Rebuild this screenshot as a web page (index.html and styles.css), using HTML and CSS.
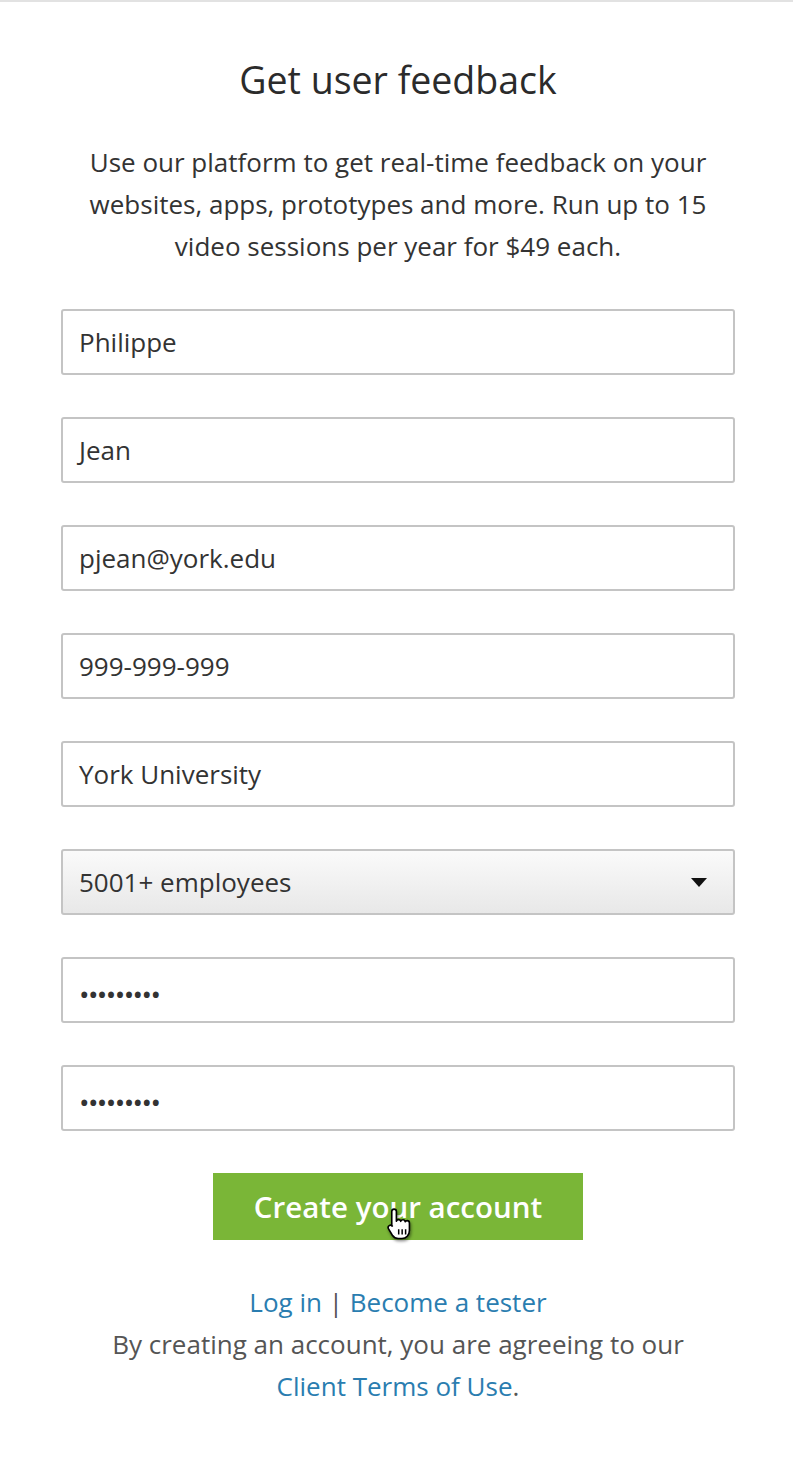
FILE: index.html
```html
<!DOCTYPE html>
<html>
<head>
<meta charset="utf-8">
<link rel="stylesheet" href="styles.css">
</head>
<body>
<div class="page">
  <h1 class="title">Get user feedback</h1>
  <p class="intro">Use our platform to get real-time feedback on your websites, apps, prototypes and more. Run up to 15 video sessions per year for $49 each.</p>
  <form class="form">
    <div class="field">Philippe</div>
    <div class="field">Jean</div>
    <div class="field">pjean@york.edu</div>
    <div class="field">999-999-999</div>
    <div class="field">York University</div>
    <div class="field select"><span>5001+ employees</span><span class="caret"></span></div>
    <div class="field pw">•••••••••</div>
    <div class="field pw">•••••••••</div>
    <div class="btn-wrap">
      <div class="btn">Create your account
        <svg class="cursor" width="30" height="35" viewBox="0 0 26 30">
          <path d="M7 2.5c1.2 0 2 .8 2 2V13c.3-.9 1-1.4 1.9-1.4 1 0 1.7.6 1.9 1.5.3-.8 1-1.3 1.9-1.3 1 0 1.8.7 1.9 1.7.3-.6 1-1 1.700-1 1.1 0 2 .9 2 2v6.5c0 4-2.8 7-6.5 7h-3.3c-2.2 0-3.8-1-5-2.8L2.2 19.6c-.6-1-.3-2.2.6-2.8.9-.6 2-.4 2.7.4L5 17.1V4.5c0-1.2.8-2 2-2z" fill="#fff" stroke="#000" stroke-width="1.4" stroke-linejoin="round"/>
          <path d="M11 20v4.5M14 20v4.5M17 20v4.5" stroke="#000" stroke-width="1.3"/>
        </svg>
      </div>
    </div>
  </form>
  <div class="links"><a class="link">Log in</a> | <a class="link">Become a tester</a></div>
  <p class="terms">By creating an account, you are agreeing to our <a class="link">Client Terms of Use</a>.</p>
</div>
</body>
</html>
```

FILE: styles.css
```css
html, body {
  margin: 0;
  padding: 0;
  background: #fff;
}
body {
  font-family: "Open Sans", Lato, sans-serif;
  color: #333;
}
.page {
  border-top: 2px solid #e2e2e2;
  width: 793px;
  box-sizing: border-box;
  padding: 0 58px 0 61px;
}
.title {
  margin: 56px 0 0;
  text-align: center;
  font-weight: 400;
  font-size: 37.5px;
  line-height: 44px;
  color: #2b2b2b;
}
.intro {
  margin: 39px auto 0;
  max-width: 660px;
  text-align: center;
  font-size: 26px;
  line-height: 42px;
  color: #333;
}
.form {
  margin-top: 42px;
  display: flex;
  flex-direction: column;
  gap: 42px;
}
.field {
  height: 66px;
  box-sizing: border-box;
  border: 2px solid #c4c4c4;
  border-radius: 3px;
  padding: 0 16px;
  display: flex;
  align-items: center;
  font-size: 26px;
  color: #333;
  background: #fff;
}
.select {
  justify-content: space-between;
  background: linear-gradient(#fafafa, #e8e8e8);
  padding-right: 26px;
}
.caret {
  width: 0;
  height: 0;
  border-left: 8px solid transparent;
  border-right: 8px solid transparent;
  border-top: 9px solid #111;
}
.pw {
  font-size: 28px;
  letter-spacing: -1.6px;
  padding-top: 8px;
  color: #333;
}
.btn-wrap {
  display: flex;
  justify-content: center;
}
.btn {
  position: relative;
  width: 370px;
  height: 67px;
  background: #7ab637;
  color: #fff;
  font-weight: 600;
  font-size: 29.5px;
  display: flex;
  align-items: center;
  justify-content: center;
}
.cursor {
  position: absolute;
  left: 173px;
  top: 33px;
  filter: drop-shadow(1px 2px 1.5px rgba(0, 0, 0, 0.45));
}
.links {
  margin-top: 41px;
  text-align: center;
  font-size: 26px;
  line-height: 42px;
  color: #555;
}
.link {
  color: #2a7db0;
}
.terms {
  margin: 0 auto;
  max-width: 610px;
  text-align: center;
  font-size: 26px;
  line-height: 42px;
  color: #555;
}
```
